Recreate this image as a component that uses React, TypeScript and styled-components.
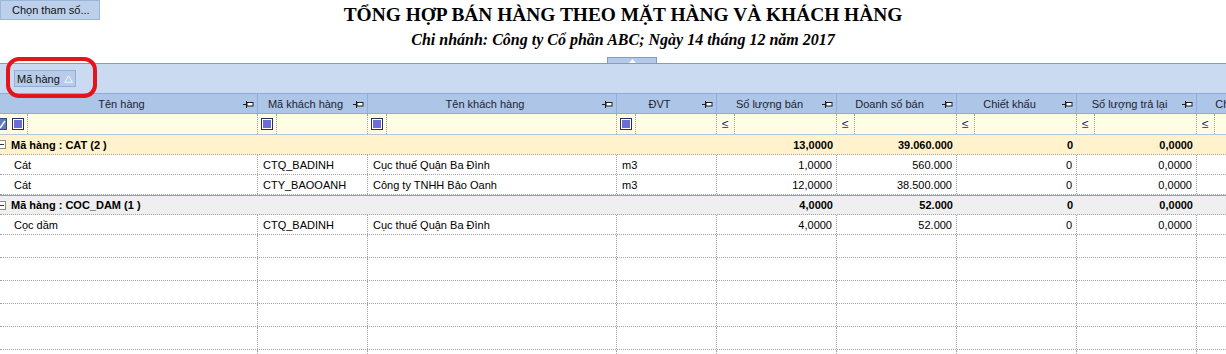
import React from "react";
import styled, { createGlobalStyle } from "styled-components";

const GlobalStyle = createGlobalStyle`
  html, body {
    margin: 0;
    padding: 0;
    background: #ffffff;
  }
  body {
    font-family: "Liberation Sans", Arial, sans-serif;
    font-size: 11px;
    color: #000;
    overflow: hidden;
  }
`;

// độ rộng các cột của lưới
const COLS = [258, 110, 249, 100, 120, 120, 120, 120, 120];
const TEMPLATE = COLS.map((w) => `${w}px`).join(" ");
const DOT = "1px dotted #a3a3a3";

type Kind = "text" | "num";

const columns: { title: string; kind: Kind }[] = [
  { title: "Tên hàng", kind: "text" },
  { title: "Mã khách hàng", kind: "text" },
  { title: "Tên khách hàng", kind: "text" },
  { title: "ĐVT", kind: "text" },
  { title: "Số lượng bán", kind: "num" },
  { title: "Doanh số bán", kind: "num" },
  { title: "Chiết khấu", kind: "num" },
  { title: "Số lượng trả lại", kind: "num" },
  { title: "Chiết khấu TL", kind: "num" },
];

const groups = [
  {
    label: "Mã hàng : CAT (2 )",
    tone: "cat" as const,
    totals: ["13,0000", "39.060.000", "0", "0,0000", ""],
    rows: [
      ["Cát", "CTQ_BADINH", "Cục thuế Quận Ba Đình", "m3", "1,0000", "560.000", "0", "0,0000", ""],
      ["Cát", "CTY_BAOOANH", "Công ty TNHH Bảo Oanh", "m3", "12,0000", "38.500.000", "0", "0,0000", ""],
    ],
  },
  {
    label: "Mã hàng : COC_DAM (1 )",
    tone: "coc" as const,
    totals: ["4,0000", "52.000", "0", "0,0000", ""],
    rows: [["Cọc dầm", "CTQ_BADINH", "Cục thuế Quận Ba Đình", "", "4,0000", "52.000", "0", "0,0000", ""]],
  },
];

const Page = styled.div`
  width: 1226px;
  height: 354px;
  overflow: hidden;
`;

const Top = styled.div`
  display: grid;
  grid-template-columns: 100px 1fr 80px;
  height: 57px;
`;

const ParamButton = styled.button`
  align-self: start;
  width: 100px;
  height: 20px;
  margin: 0;
  padding: 0 0 0 11px;
  text-align: left;
  font: 11px "Liberation Sans", Arial, sans-serif;
  color: #111;
  background: #bcd0ec;
  border: 1px solid #9cb6da;
`;

const TitleBlock = styled.div`
  text-align: center;
  font-family: "Liberation Serif", "Times New Roman", serif;
  padding-top: 3px;
  color: #000;
`;

const Title = styled.h1`
  margin: 0;
  font-size: 19.4px;
  line-height: 23px;
  font-weight: bold;
  white-space: nowrap;
`;

const Subtitle = styled.div`
  margin-top: 4px;
  font-size: 16px;
  line-height: 20px;
  font-weight: bold;
  font-style: italic;
  white-space: nowrap;
`;

const GroupArea = styled.div`
  position: relative;
`;

const Splitter = styled.div`
  height: 6px;
  display: flex;
  justify-content: center;
  align-items: flex-end;
  padding-left: 38px;
  border-bottom: 1px solid #7f9dc7;
`;

const SplitTab = styled.div`
  width: 48px;
  height: 5px;
  background: #b3c9e8;
  border: 1px solid #7f9dc7;
  border-bottom: none;
  display: flex;
  justify-content: center;
  align-items: center;
`;

const GroupPanel = styled.div`
  height: 29px;
  box-sizing: border-box;
  background: #c9daf1;
  padding: 6px 0 0 14px;
`;

const GroupChip = styled.div`
  display: inline-flex;
  align-items: center;
  gap: 4px;
  height: 17px;
  box-sizing: border-box;
  padding: 0 2px 0 2px;
  background: #b7cce9;
  border: 1px solid #93afd8;
  color: #111;
`;

const Annotation = styled.div`
  position: absolute;
  left: 6px;
  top: 0;
  width: 91px;
  height: 41px;
  box-sizing: border-box;
  border: 4px solid #e3151a;
  border-radius: 13px;
  z-index: 2;
  pointer-events: none;
`;

const Grid = styled.div`
  overflow: hidden;
  border-top: 1px solid #8eaad6;
`;

const Row = styled.div<{ $h: number; $bg?: string }>`
  display: grid;
  grid-template-columns: ${TEMPLATE};
  height: ${(p) => p.$h}px;
  box-sizing: border-box;
  background: ${(p) => p.$bg ?? "#fff"};
`;

const HeaderRow = styled(Row)`
  border-bottom: 1px solid #8eaad6;
`;

const HeaderCell = styled.div`
  display: flex;
  align-items: center;
  border-right: 1px solid #8eb0dd;
  color: #1c2433;
  white-space: nowrap;
  overflow: hidden;
`;

const HeaderText = styled.span`
  flex: 1;
  text-align: center;
`;

const FilterRow = styled(Row)`
  border-bottom: 1px solid #b9c6d8;
`;

const FilterCell = styled.div`
  display: flex;
  align-items: stretch;
  border-right: ${DOT};
  overflow: hidden;
`;

const Indicator = styled.div`
  width: 9px;
  display: flex;
  align-items: center;
  overflow: hidden;
`;

const Op = styled.div<{ $kind: Kind }>`
  width: ${(p) => (p.$kind === "num" ? 18 : 19)}px;
  box-sizing: border-box;
  border-right: ${DOT};
  display: flex;
  align-items: center;
  padding-left: ${(p) => (p.$kind === "num" ? 5 : 3)}px;
  color: #1b1b78;
  font-size: 12px;
`;

const Check = styled.span`
  width: 12px;
  height: 12px;
  box-sizing: border-box;
  border: 1px solid #2c2c5a;
  background: #fff;
  padding: 1px;
  display: block;
  &::after {
    content: "";
    display: block;
    width: 8px;
    height: 8px;
    background: #6c6cd8;
  }
`;

const GroupRow = styled(Row)<{ $tone: "cat" | "coc" }>`
  border-bottom: ${DOT};
  border-top: ${(p) => (p.$tone === "coc" ? "1px solid #7ea3d8" : "none")};
  font-weight: bold;
`;

const GroupLabel = styled.div`
  grid-column: 1 / span 4;
  display: flex;
  align-items: center;
  gap: 5px;
  margin-left: -3px;
  white-space: nowrap;
`;

const Expander = styled.span`
  width: 9px;
  height: 9px;
  box-sizing: border-box;
  border: 1px solid #8c8c8c;
  background: #fff;
  position: relative;
  &::after {
    content: "";
    position: absolute;
    left: 1px;
    right: 1px;
    top: 3px;
    height: 1px;
    background: #333;
  }
`;

const Cell = styled.div<{ $align?: "left" | "right"; $first?: boolean; $lined?: boolean }>`
  display: flex;
  align-items: center;
  justify-content: ${(p) => (p.$align === "right" ? "flex-end" : "flex-start")};
  padding: ${(p) => (p.$first ? "0 4px 0 14px" : p.$align === "right" ? "0 4px 0 0" : "0 4px 0 5px")};
  border-right: ${(p) => (p.$lined === false ? "none" : DOT)};
  white-space: nowrap;
  overflow: hidden;
`;

const DataRow = styled(Row)`
  border-bottom: ${DOT};
`;

function PinIcon() {
  return (
    <svg width="11" height="8" viewBox="0 0 11 8" style={{ marginRight: 3, flexShrink: 0 }}>
      <path d="M0 4.5H3.5M3.5 1V8" stroke="#1d1d1d" strokeWidth="1" fill="none" />
      <rect x="4" y="2.5" width="6" height="3.5" fill="#fff" stroke="#1d1d1d" strokeWidth="1" />
    </svg>
  );
}

function EditIcon() {
  return (
    <svg width="9" height="12" viewBox="0 0 9 12" style={{ marginLeft: -2 }}>
      <rect x="0.5" y="0.5" width="8" height="11" fill="#5c7fbb" stroke="#2f4f86" />
      <path d="M2 10L7 3" stroke="#fff" strokeWidth="1.5" />
    </svg>
  );
}

export default function App() {
  return (
    <Page>
      <GlobalStyle />
      <Top>
        <ParamButton>Chọn tham số...</ParamButton>
        <TitleBlock>
          <Title>TỔNG HỢP BÁN HÀNG THEO MẶT HÀNG VÀ KHÁCH HÀNG</Title>
          <Subtitle>Chi nhánh: Công ty Cổ phần ABC; Ngày 14 tháng 12 năm 2017</Subtitle>
        </TitleBlock>
        <div />
      </Top>

      <GroupArea>
        <Splitter>
          <SplitTab>
            <svg width="7" height="4" viewBox="0 0 7 4">
              <path d="M0 4L3.5 0L7 4Z" fill="#fff" />
            </svg>
          </SplitTab>
        </Splitter>
        <GroupPanel>
          <GroupChip>
            Mã hàng
            <svg width="9" height="8" viewBox="0 0 9 8">
              <path d="M4.5 0.8L8.3 7.3H0.7Z" fill="none" stroke="#f4f6fa" strokeWidth="1" />
            </svg>
          </GroupChip>
        </GroupPanel>
        <Annotation />
      </GroupArea>

      <Grid>
        <HeaderRow $h={20} $bg="#adc5e6">
          {columns.map((c) => (
            <HeaderCell key={c.title}>
              <HeaderText>{c.title}</HeaderText>
              <PinIcon />
            </HeaderCell>
          ))}
        </HeaderRow>

        <FilterRow $h={21} $bg="#fffde3">
          {columns.map((c, i) => (
            <FilterCell key={c.title}>
              {i === 0 && (
                <Indicator>
                  <EditIcon />
                </Indicator>
              )}
              <Op $kind={c.kind}>{c.kind === "num" ? "≤" : <Check />}</Op>
            </FilterCell>
          ))}
        </FilterRow>

        {groups.map((g) => (
          <React.Fragment key={g.label}>
            <GroupRow $h={20} $tone={g.tone} $bg={g.tone === "cat" ? "#fff2cc" : "#efefef"}>
              <GroupLabel>
                <Expander />
                {g.label}
              </GroupLabel>
              {g.totals.map((t, i) => (
                <Cell key={i} $align="right" $lined={false}>
                  {t}
                </Cell>
              ))}
            </GroupRow>
            {g.rows.map((r, ri) => (
              <DataRow key={ri} $h={20}>
                {r.map((v, ci) => (
                  <Cell key={ci} $first={ci === 0} $align={columns[ci].kind === "num" ? "right" : "left"}>
                    {v}
                  </Cell>
                ))}
              </DataRow>
            ))}
          </React.Fragment>
        ))}

        {Array.from({ length: 6 }).map((_, ri) => (
          <DataRow key={`e${ri}`} $h={23}>
            {columns.map((c) => (
              <Cell key={c.title} />
            ))}
          </DataRow>
        ))}
      </Grid>
    </Page>
  );
}
